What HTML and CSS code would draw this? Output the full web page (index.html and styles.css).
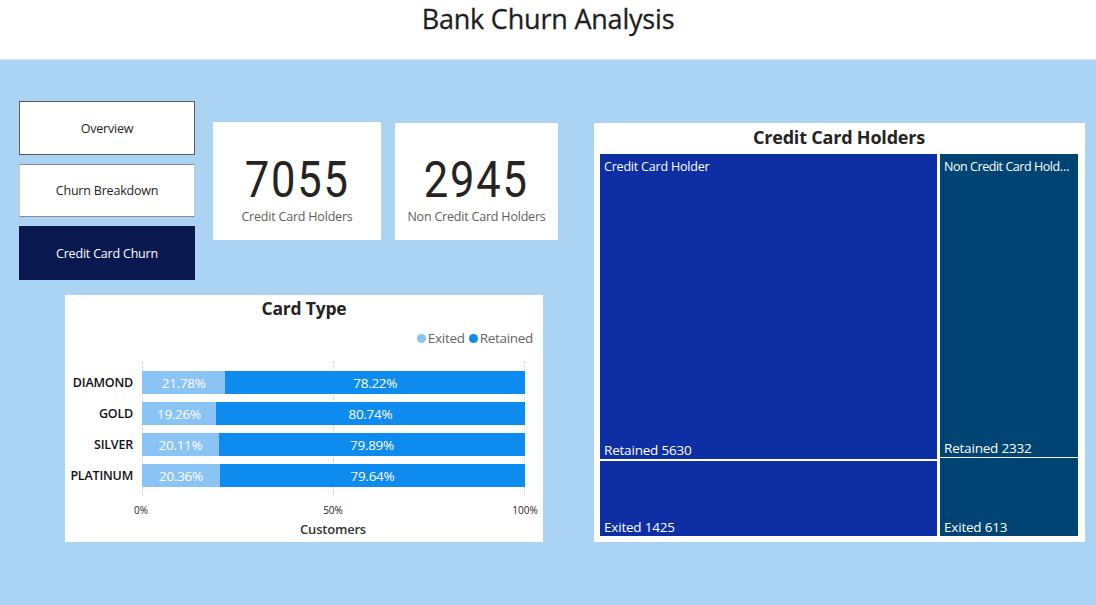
FILE: index.html
```html
<!DOCTYPE html>
<html>
<head>
<meta charset="utf-8">
<link rel="stylesheet" href="styles.css">
</head>
<body>
<header class="header"><h1 class="page-title">Bank Churn Analysis</h1></header>
<main class="main">
  <div class="left">
    <div class="top-row">
      <nav class="nav">
        <div class="btn btn-a">Overview</div>
        <div class="btn btn-b">Churn Breakdown</div>
        <div class="btn btn-active">Credit Card Churn</div>
      </nav>
      <div class="kpi kpi-1">
        <div class="kpi-value">7055</div>
        <div class="kpi-label">Credit Card Holders</div>
      </div>
      <div class="kpi kpi-2">
        <div class="kpi-value">2945</div>
        <div class="kpi-label">Non Credit Card Holders</div>
      </div>
    </div>
    <section class="chart">
      <div class="chart-title">Card Type</div>
      <div class="legend">
        <span class="lg-item"><span class="dot dot-exit"></span>Exited</span>
        <span class="lg-item"><span class="dot dot-ret"></span>Retained</span>
      </div>
      <div class="plot-wrap">
        <div class="cats">
          <div class="cat">DIAMOND</div>
          <div class="cat">GOLD</div>
          <div class="cat">SILVER</div>
          <div class="cat">PLATINUM</div>
        </div>
        <div class="plot">
          <div class="grid g0"></div>
          <div class="grid g50"></div>
          <div class="grid g100"></div>
          <div class="bar"><div class="seg exit" style="width:21.78%">21.78%</div><div class="seg ret">78.22%</div></div>
          <div class="bar"><div class="seg exit" style="width:19.26%">19.26%</div><div class="seg ret">80.74%</div></div>
          <div class="bar"><div class="seg exit" style="width:20.11%">20.11%</div><div class="seg ret">79.89%</div></div>
          <div class="bar"><div class="seg exit" style="width:20.36%">20.36%</div><div class="seg ret">79.64%</div></div>
        </div>
      </div>
      <div class="axis">
        <span class="tick t0">0%</span>
        <span class="tick t50">50%</span>
        <span class="tick t100">100%</span>
      </div>
      <div class="axis-title">Customers</div>
    </section>
  </div>
  <section class="treemap">
    <div class="tm-title">Credit Card Holders</div>
    <div class="tm-body">
      <div class="tm-col tm-cc">
        <div class="tm-cell tm-ret-cc">
          <div class="tm-group">Credit Card Holder</div>
          <div class="tm-leaf">Retained 5630</div>
        </div>
        <div class="tm-cell tm-exit-cc">
          <div class="tm-leaf">Exited 1425</div>
        </div>
      </div>
      <div class="tm-col tm-ncc">
        <div class="tm-cell tm-ret-ncc">
          <div class="tm-group tm-group-n">Non Credit Card Holders</div>
          <div class="tm-leaf">Retained 2332</div>
        </div>
        <div class="tm-cell tm-exit-ncc">
          <div class="tm-leaf">Exited 613</div>
        </div>
      </div>
    </div>
  </section>
</main>
</body>
</html>
```

FILE: styles.css
```css
* { box-sizing: border-box; }
html, body { margin: 0; padding: 0; }
body {
  width: 1096px;
  height: 605px;
  overflow: hidden;
  background: #abd3f3;
  font-family: "Open Sans", "Noto Sans", sans-serif;
  color: #252423;
}
.header {
  height: 60px;
  background: #fff;
  border-bottom: 1px solid #e3e9ee;
  display: flex;
  justify-content: center;
}
.page-title {
  margin: 0;
  padding-top: 2px;
  font-weight: 400;
  font-size: 27px;
  line-height: 34px;
  letter-spacing: -0.2px;
  color: #1e1e1e;
  -webkit-text-stroke: 0.3px #1e1e1e;
}
.main {
  display: flex;
  padding: 41px 0 0 19px;
}
.left { display: flex; flex-direction: column; width: 539px; flex-shrink: 0; }
.top-row { display: flex; align-items: flex-start; }
.nav { display: flex; flex-direction: column; gap: 9px; width: 176px; }
.btn {
  height: 54px;
  display: flex;
  align-items: center;
  justify-content: center;
  background: #fff;
  font-size: 12.5px;
  letter-spacing: -0.2px;
  color: #252423;
}
.btn-a { border: 1px solid #595959; }
.btn-b { border: 1px solid #8a8a8a; border-left-color: #c8c8c8; border-right-color: #c8c8c8; height: 53px; }
.btn-active { background: #0a1850; color: #fff; border: 1px solid #0a1850; }
.kpi {
  background: #fff;
  height: 118px;
  margin-top: 21px;
  display: flex;
  flex-direction: column;
  align-items: center;
  padding-top: 31px;
}
.kpi-1 { width: 168px; margin-left: 18px; }
.kpi-2 { width: 163px; margin-left: 14px; margin-top: 22px; height: 117px; padding-top: 30px; }
.kpi-value {
  font-family: "Roboto", sans-serif;
  font-size: 50px;
  line-height: 55px;
  height: 55px;
  letter-spacing: 2px;
  color: #252423;
  transform: scaleX(0.87);
}
.kpi-label {
  font-size: 12.5px;
  line-height: 18px;
  letter-spacing: -0.2px;
  color: #605e5c;
}
.chart {
  background: #fff;
  width: 478px;
  height: 247px;
  margin-top: 15px;
  margin-left: 46px;
  display: flex;
  flex-direction: column;
  padding-top: 1px;
}
.chart-title {
  text-align: center;
  font-weight: 700;
  font-size: 17.5px;
  line-height: 24px;
  letter-spacing: -0.2px;
  color: #252423;
}
.legend {
  display: flex;
  justify-content: flex-end;
  gap: 4px;
  padding-right: 10px;
  margin-top: 10px;
  font-size: 13.5px;
  line-height: 17px;
  color: #666;
  letter-spacing: -0.3px;
}
.lg-item { display: flex; align-items: center; gap: 2px; }
.dot { width: 9px; height: 9px; border-radius: 50%; display: inline-block; }
.dot-exit { background: #89c4f4; }
.dot-ret { background: #0d8bef; }
.plot-wrap { display: flex; margin-top: 15px; }
.cats {
  width: 68px;
  display: flex;
  flex-direction: column;
  gap: 8px;
  padding-top: 9px;
}
.cat {
  height: 23px;
  display: flex;
  align-items: center;
  justify-content: flex-end;
  font-size: 12.5px;
  font-weight: 600;
  color: #111;
  letter-spacing: -0.2px;
}
.plot {
  position: relative;
  width: 383px;
  margin-left: 9px;
  height: 134px;
  display: flex;
  flex-direction: column;
  gap: 8px;
  padding-top: 9px;
}
.grid {
  position: absolute;
  top: 0;
  bottom: 0;
  width: 0;
  border-left: 1px dotted #d0d0d0;
}
.g0 { left: 0; }
.g50 { left: 191px; }
.g100 { left: 382px; }
.bar { position: relative; height: 23px; display: flex; }
.seg {
  display: flex;
  align-items: center;
  justify-content: center;
  color: #fff;
  font-size: 13.5px;
  letter-spacing: -0.3px;
}
.exit { background: #89c4f4; }
.ret { background: #0d8bef; flex: 1; }
.axis { position: relative; height: 18px; margin-top: 7px; }
.tick {
  position: absolute;
  top: 0;
  font-size: 10px;
  color: #252423;
  transform: translateX(-50%);
}
.t0 { left: 76px; }
.t50 { left: 268px; }
.t100 { left: 460px; }
.axis-title {
  text-align: center;
  padding-left: 58px;
  font-size: 13px;
  font-weight: 600;
  color: #333;
  letter-spacing: -0.2px;
  margin-top: -1px;
}
.treemap {
  background: #fff;
  width: 491px;
  height: 419px;
  margin-left: 36px;
  margin-top: 22px;
  padding: 0 7px 6px 6px;
  display: flex;
  flex-direction: column;
  flex-shrink: 0;
}
.tm-title {
  height: 31px;
  text-align: center;
  font-weight: 700;
  font-size: 18px;
  line-height: 29px;
  letter-spacing: -0.2px;
  color: #252423;
}
.tm-body { flex: 1; display: flex; gap: 3px; min-height: 0; }
.tm-col { display: flex; flex-direction: column; min-width: 0; }
.tm-cc { width: 337px; flex-shrink: 0; gap: 2px; }
.tm-ncc { flex: 1 1 0; gap: 1px; }
.tm-cell {
  display: flex;
  flex-direction: column;
  justify-content: space-between;
  padding: 5px 4px 1px 4px;
  color: #fff;
  font-size: 12.5px;
  letter-spacing: -0.2px;
  min-width: 0;
}
.tm-exit-cc, .tm-exit-ncc { justify-content: flex-end; }
.tm-ret-cc { height: 305px; background: #0d2fa3; }
.tm-exit-cc { flex: 1; background: #0d2fa3; }
.tm-ret-ncc { height: 303px; background: #004473; }
.tm-exit-ncc { flex: 1; background: #004473; }
.tm-group { white-space: nowrap; overflow: hidden; text-overflow: ellipsis; line-height: 16px; }
.tm-group-n { letter-spacing: -0.45px; padding-right: 1px; }
.tm-leaf { font-size: 13.5px; line-height: 16px; white-space: nowrap; }
```
